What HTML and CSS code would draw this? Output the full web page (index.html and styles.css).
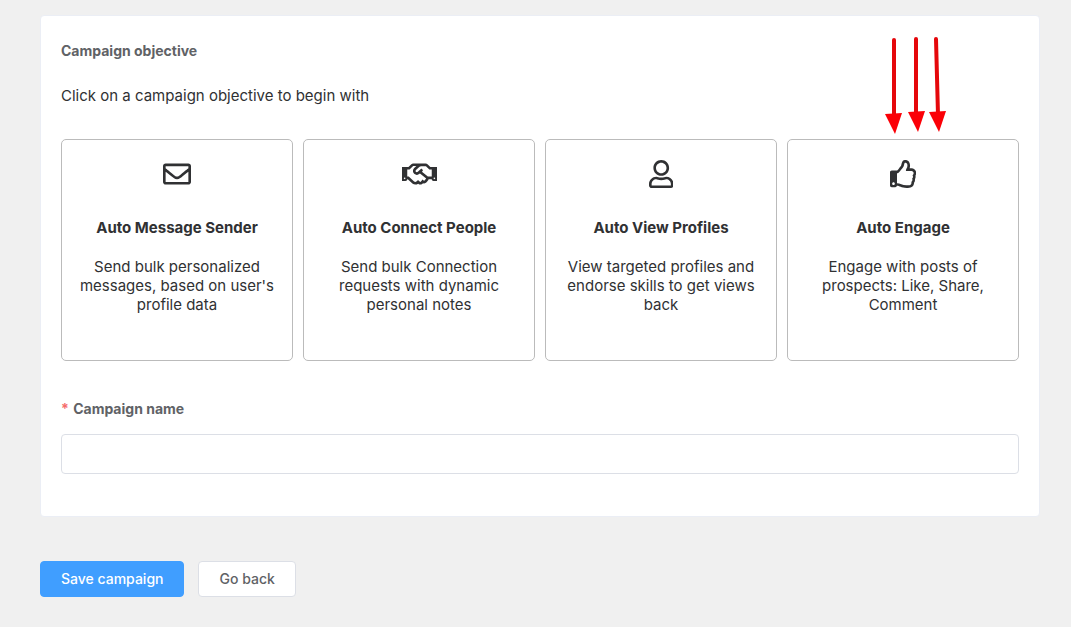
FILE: index.html
```
<!DOCTYPE html>
<html lang="en">
<head>
    <meta charset="UTF-8">
    <meta name="viewport" content="width=device-width, initial-scale=1">
    <title>New campaign</title>
    <link rel="stylesheet" href="styles.css">
</head>
<body>
    <form class="campaign-form">
        <div class="panel">
            <h1 class="label">Campaign objective</h1>
            <p class="hint">Click on a campaign objective to begin with</p>

            <div class="objectives">
                <button type="button" class="objective">
                    <svg class="icon" viewBox="0 0 512 512" aria-hidden="true"><path d="M464 64H48C21.49 64 0 85.49 0 112v288c0 26.51 21.49 48 48 48h416c26.51 0 48-21.49 48-48V112c0-26.51-21.49-48-48-48zm0 48v40.805c-22.422 18.259-58.168 46.651-134.587 106.49-16.841 13.247-50.201 45.072-73.413 44.701-23.208.375-56.579-31.459-73.413-44.701C106.18 199.465 70.425 171.067 48 152.805V112h416zM48 400V214.398c22.914 18.251 55.409 43.862 104.938 82.646 21.857 17.205 60.134 55.186 103.062 54.955 42.717.231 80.509-37.199 103.053-54.947 49.528-38.783 82.032-64.401 104.947-82.653V400H48z"/></svg>
                    <span class="objective-title">Auto Message Sender</span>
                    <span class="objective-text">Send bulk personalized messages, based on user's profile data</span>
                </button>
                <button type="button" class="objective">
                    <svg class="icon" viewBox="0 0 640 512" aria-hidden="true"><path d="M519.2 127.9l-47.6-47.6A56.252 56.252 0 0 0 432 64H205.2c-14.8 0-29.1 5.9-39.6 16.3L118 127.9H0v255.7h64c17.6 0 31.8-14.2 31.9-31.7h9.1l84.6 76.4c30.9 25.1 73.8 25.7 105.6 3.8 12.5 10.8 26 15.9 41.1 15.9 18.2 0 35.3-7.4 48.8-24 22.1 8.7 48.2 2.6 64-16.8l26.2-32.3c5.6-6.9 9.1-14.8 10.9-23h57.9c.1 17.5 14.4 31.7 31.9 31.7h64V127.9H519.2zM48 351.6c-8.8 0-16-7.2-16-16s7.2-16 16-16 16 7.2 16 16c0 8.9-7.2 16-16 16zm390-6.9l-26.1 32.2c-2.8 3.4-7.8 4-11.3 1.2l-23.9-19.4-30 36.5c-6 7.3-15 4.8-18 2.4l-36.8-31.5-15.6 19.2c-13.9 17.1-39.2 19.7-55.3 6.6l-97.3-88H96V175.8h41.9l61.7-61.6c2-.8 3.7-1.5 5.7-2.3H262l-38.7 35.5c-29.4 26.9-31.1 72.3-4.4 101.3 14.8 16.2 61.2 41.2 101.5 4.4l8.2-7.5 108.2 87.8c3.4 2.8 3.9 7.9 1.2 11.3zm106-40.8h-69.2c-2.3-2.8-4.9-5.4-7.7-7.7l-102.7-83.4 12.5-11.4c6.5-6 7-16.1 1-22.6L367 167.1c-6-6.5-16.1-6.9-22.6-1l-55.2 50.6c-9.5 8.7-25.7 9.4-34.6 0-9.3-9.9-8.5-25.1 1.2-33.9l65.6-60.1c7.4-6.8 17-10.5 27-10.5l83.7-.2c2.1 0 4.1.8 5.5 2.3l61.7 61.6H544v128zm48 47.7c-8.8 0-16-7.2-16-16s7.2-16 16-16 16 7.2 16 16c0 8.9-7.2 16-16 16z"/></svg>
                    <span class="objective-title">Auto Connect People</span>
                    <span class="objective-text">Send bulk Connection requests with dynamic personal notes</span>
                </button>
                <button type="button" class="objective">
                    <svg class="icon" viewBox="0 0 448 512" aria-hidden="true"><path d="M313.6 304c-28.7 0-42.5 16-89.6 16-47.1 0-60.8-16-89.6-16C60.2 304 0 364.2 0 438.4V464c0 26.5 21.5 48 48 48h352c26.5 0 48-21.5 48-48v-25.6c0-74.2-60.2-134.4-134.4-134.4zM400 464H48v-25.6c0-47.6 38.8-86.4 86.4-86.4 14.6 0 38.3 16 89.6 16 51.7 0 74.9-16 89.6-16 47.6 0 86.4 38.8 86.4 86.4V464zM224 288c79.5 0 144-64.5 144-144S303.5 0 224 0 80 64.5 80 144s64.5 144 144 144zm0-240c52.9 0 96 43.1 96 96s-43.1 96-96 96-96-43.1-96-96 43.1-96 96-96z"/></svg>
                    <span class="objective-title">Auto View Profiles</span>
                    <span class="objective-text">View targeted profiles and endorse skills to get views back</span>
                </button>
                <button type="button" class="objective">
                    <svg class="icon" viewBox="0 0 480 512" aria-hidden="true"><path d="M466.27 286.69C475.04 271.84 480 256 480 236.85c0-44.015-37.218-85.58-85.82-85.58H357.7c4.92-12.81 8.85-28.13 8.85-46.54C366.55 31.936 328.86 0 271.28 0c-61.607 0-58.093 94.933-71.76 108.6-22.747 22.747-49.615 66.447-68.76 83.4H32c-17.673 0-32 14.327-32 32v240c0 17.673 14.327 32 32 32h64c14.893 0 27.408-10.174 30.978-23.95 44.509 1.001 75.06 39.94 177.802 39.94 7.22 0 15.22.01 22.22.01 77.117 0 111.986-39.423 112.94-95.33 13.319-18.425 20.299-43.122 17.34-66.99 9.854-18.452 13.664-40.343 8.99-62.99zm-61.75 53.83c12.56 21.13 1.26 49.41-13.94 57.57 7.7 48.78-17.608 65.9-53.12 65.9h-37.82c-71.639 0-118.029-37.82-171.64-37.82V240h10.92c28.36 0 67.98-70.89 94.54-97.46 28.36-28.36 18.91-75.63 37.82-94.54 47.27 0 47.27 32.98 47.27 56.73 0 39.17-28.36 56.72-28.36 94.54h103.99c21.11 0 37.73 18.91 37.82 37.82.09 18.9-12.82 37.81-22.27 37.81 13.489 14.555 16.371 45.236-5.21 65.62zM88 432c0 13.255-10.745 24-24 24s-24-10.745-24-24 10.745-24 24-24 24 10.745 24 24z"/></svg>
                    <span class="objective-title">Auto Engage</span>
                    <span class="objective-text">Engage with posts of prospects: Like, Share, Comment</span>
                    <!-- arrows pointing at the card -->
                    <svg class="arrows" viewBox="0 0 64 100" aria-hidden="true">
                        <g stroke="#e5070b" stroke-width="4" stroke-linecap="round">
                            <path d="M10 5V82"/>
                            <path d="M32 4V80"/>
                            <path d="M52 4L54 80"/>
                        </g>
                        <g fill="#fb0007">
                            <path d="M1 79L18 78L11 99Z"/>
                            <path d="M24 77L41 76L34 97Z"/>
                            <path d="M45 77L62 76L55 97Z"/>
                        </g>
                    </svg>
                </button>
            </div>

            <label class="label" for="campaignName"><span class="required">*</span> Campaign name</label>
            <input type="text" id="campaignName" class="text-input" required>
        </div>

        <div class="actions">
            <button type="submit" class="btn btn-primary">Save campaign</button>
            <button type="button" class="btn">Go back</button>
        </div>
    </form>
</body>
</html>
```
FILE: styles.css
```
* {
    box-sizing: border-box;
}
body {
    margin: 0;
    background-color: #f0f0f0;
    color: #303133;
    font-family: Inter, "Liberation Sans", sans-serif;
    font-size: 15px;
}
button, input {
    font-family: inherit;
}
.campaign-form {
    padding: 15px 31px 30px 40px;
}
.panel {
    padding: 20px 20px 42px;
    background-color: #fff;
    border: 1px solid #ebeef5;
    border-radius: 4px;
}
.label {
    display: block;
    margin: 0;
    color: #606266;
    font-size: 14px;
    font-weight: 700;
    line-height: 30px;
}
.hint {
    margin: 20px 0 33px;
    line-height: 20px;
}
.objectives {
    display: grid;
    grid-template-columns: repeat(4, 1fr);
    gap: 10px;
    margin-bottom: 33px;
}
.objective {
    position: relative;
    display: flex;
    flex-direction: column;
    align-items: center;
    min-height: 222px;
    padding: 20px 15px;
    background-color: #fff;
    border: 1px solid #bbb;
    border-radius: 5px;
    color: #303133;
    font-size: 15px;
    line-height: 19px;
    cursor: pointer;
}
.objective:hover {
    border-color: #409eff;
}
.icon {
    height: 28px;
    margin-bottom: 30px;
    fill: currentColor;
}
.objective-title {
    margin-bottom: 20px;
    font-weight: 700;
}
.arrows {
    position: absolute;
    bottom: 100%;
    left: 50%;
    width: 64px;
    margin: 0 0 5px -19px;
    fill: none;
    pointer-events: none;
}
.required {
    margin-right: 1px;
    color: #f56c6c;
}
.text-input {
    display: block;
    width: 100%;
    height: 40px;
    margin-top: 10px;
    padding: 0 15px;
    border: 1px solid #dcdfe6;
    border-radius: 4px;
    color: #606266;
    font-size: 14px;
}
.actions {
    display: flex;
    gap: 14px;
    margin-top: 44px;
}
.btn {
    height: 36px;
    padding: 0 20px 2px;
    background-color: #fff;
    border: 1px solid #dcdfe6;
    border-radius: 4px;
    color: #606266;
    font-size: 14px;
    font-weight: 500;
    cursor: pointer;
}
.btn-primary {
    background-color: #409eff;
    border-color: #409eff;
    color: #fff;
}
```
